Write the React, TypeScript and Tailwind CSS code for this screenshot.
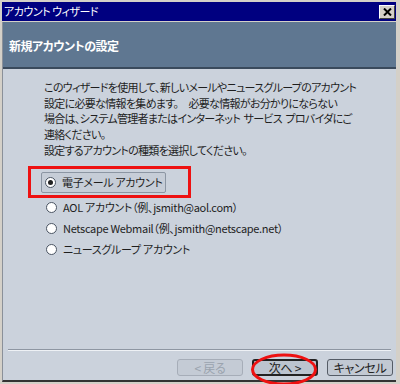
import React from 'react'

const jp = "font-['Noto_Sans_CJK_JP','Liberation_Sans',sans-serif] [font-feature-settings:'palt']"

function Radio({ checked }: { checked?: boolean }) {
  return (
    <span className="w-[11px] h-[11px] rounded-full border border-[#4b5563] bg-white flex items-center justify-center shrink-0">
      {checked && <span className="w-[5px] h-[5px] rounded-full bg-[#222]" />}
    </span>
  )
}

function Btn({ children, variant }: { children: React.ReactNode; variant?: 'default' | 'disabled' }) {
  const base = 'w-[66px] h-[17px] rounded-[3px] flex items-center justify-center text-[12px] leading-none tracking-[-0.3px] whitespace-nowrap'
  if (variant === 'disabled')
    return <div className={`${base} border border-[#a6adb8] bg-[#c4cbd5] text-[#9aa3ae]`}>{children}</div>
  if (variant === 'default')
    return <div className={`${base} border-2 border-[#222] bg-[#bcc4cf] text-[#222]`}>{children}</div>
  return <div className={`${base} border border-[#555c66] bg-[#c2c9d3] text-[#222]`}>{children}</div>
}

export default function App() {
  return (
    <div className={`w-[400px] h-[384px] bg-[#d4d0c8] pt-[2px] pl-[2px] pr-[4px] pb-[2px] flex flex-col ${jp}`}>
      {/* title bar */}
      <div className="h-[19px] bg-[#000080] flex items-center justify-between pl-[2px] pr-[1px]">
        <span className="text-white text-[11px] leading-none tracking-[-0.5px] whitespace-nowrap">アカウント ウィザード</span>
        <div className="w-[16px] h-[14px] bg-[#d4d0c8] border-t border-l border-white border-r border-b border-r-[#404040] border-b-[#404040] flex items-center justify-center">
          <svg width="9" height="8" viewBox="0 0 9 8">
            <path d="M1 0.5 L8 7.5 M8 0.5 L1 7.5" stroke="#000" strokeWidth="2" />
          </svg>
        </div>
      </div>

      <div className="flex-1 flex flex-col mt-[1px] border-l border-[#8a9099] border-b-2 border-b-[#333]">
        {/* header */}
        <div className="h-[47px] bg-[#5f7791] border-b-2 border-[#3a4a5c] pl-[6px] pt-[10px]">
          <span className="text-white text-[12px] leading-none font-bold tracking-[-0.5px] whitespace-nowrap">新規アカウントの設定</span>
        </div>

        {/* body */}
        <div className="flex-1 bg-[#cbd2dc] flex flex-col">
          <div className="pl-[41px] pt-[11px] text-[11px] leading-[15.7px] tracking-[-0.7px] whitespace-nowrap text-[#1e1e1e]">
            <p>
              このウィザードを使用して、新しいメールやニュースグループのアカウント
              <br />
              設定に必要な情報を集めます。　必要な情報がお分かりにならない
              <br />
              場合は、システム管理者またはインターネット{'\u00a0\u00a0'}サービス{'\u00a0\u00a0'}プロバイダにご
              <br />
              連絡ください。
            </p>
            <p>設定するアカウントの種類を選択してください。</p>
          </div>

          <div className="pl-[25px] mt-[7px] flex flex-col text-[11px] tracking-[-0.3px] whitespace-nowrap text-[#1e1e1e]">
            <div className="w-[163px] h-[32px] border-[3px] border-[#ee1111] pl-[10px] pt-[3px]">
              <div className="w-[125px] h-[21px] rounded-[2px] border border-[#8c96a3] bg-[#c6cdd7] flex items-center gap-[6px] pl-[3px]">
                <Radio checked />
                <span>電子メール{'\u00a0'}アカウント</span>
              </div>
            </div>
            <div className="pl-[18px] -mt-[1px] flex flex-col">
              <div className="h-[21px] flex items-center gap-[6px]">
                <Radio />
                <span>AOL アカウント（例、jsmith@aol.com）</span>
              </div>
              <div className="h-[21px] flex items-center gap-[6px]">
                <Radio />
                <span>Netscape Webmail（例、jsmith@netscape.net）</span>
              </div>
              <div className="h-[21px] flex items-center gap-[6px]">
                <Radio />
                <span>ニュースグループ{'\u00a0'}アカウント</span>
              </div>
            </div>
          </div>

          <div className="flex-1" />

          <div className="mx-[5px] h-[2px] border-t border-[#8e96a2] border-b border-b-[#eef1f5]" />

          <div className="relative flex justify-end gap-[9px] pr-[3px] pt-[8px] pb-[4px]">
            <Btn variant="disabled">&lt; 戻る</Btn>
            <Btn variant="default">次へ &gt;</Btn>
            <Btn>キャンセル</Btn>
            <svg className="absolute left-[247px] top-[2px]" width="68" height="33" viewBox="0 0 68 33">
              <ellipse cx="34" cy="16.5" rx="31.5" ry="14.5" fill="none" stroke="#ee1111" strokeWidth="3" />
            </svg>
          </div>
        </div>
      </div>
    </div>
  )
}
